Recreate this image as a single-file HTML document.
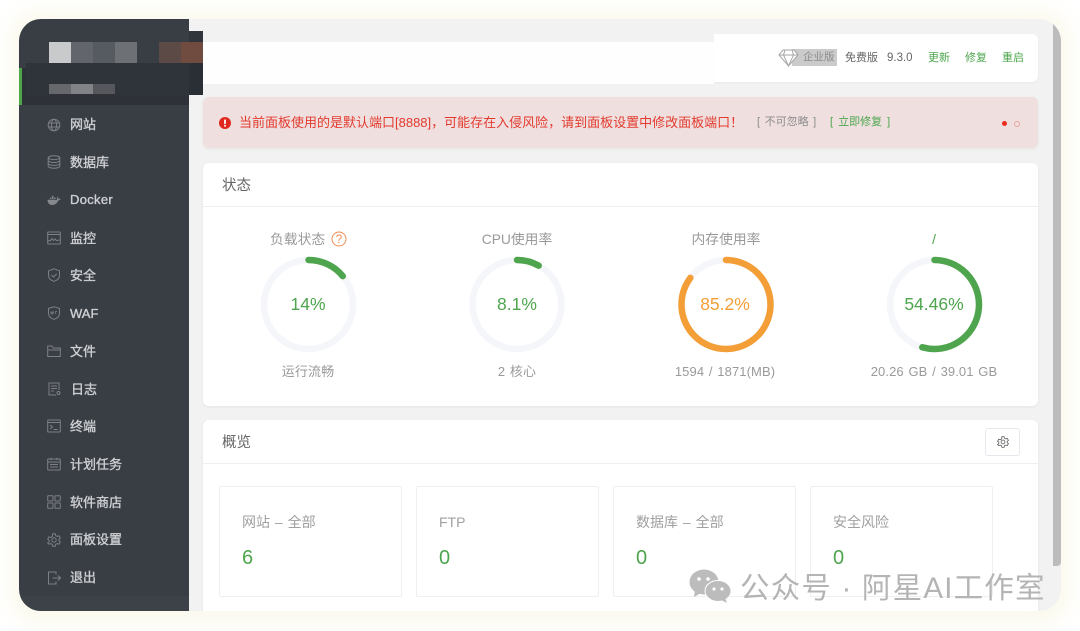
<!DOCTYPE html>
<html><head><meta charset="utf-8">
<style>
*{box-sizing:border-box;margin:0;padding:0}
html,body{width:1080px;height:631px;overflow:hidden;background:#fff}
body{font-family:"Liberation Sans","Noto Sans CJK SC",sans-serif;position:relative}
.a{position:absolute}
.t{position:absolute;white-space:nowrap;line-height:18px}
#glow{left:8px;top:8px;width:1064px;height:618px;border-radius:32px;background:#fbf9ec;filter:blur(9px);opacity:.85}
#win{left:19px;top:19px;width:1042px;height:592px;border-radius:22px;overflow:hidden;background:#f2f2f2}
#side{left:0;top:0;width:170px;height:592px;background:#393e45}
.menu{position:absolute;left:70px;color:#cfd0d3;font-size:13px;font-weight:normal;-webkit-text-stroke:.35px #cfd0d3;line-height:18px;white-space:nowrap}
.ic{position:absolute;left:47px;width:14px;height:14px;fill:none;stroke:#7d8085;stroke-width:1}
.card{position:absolute;background:#fff;border-radius:6px;box-shadow:0 1px 3px rgba(0,0,0,.06)}
.lbl{position:absolute;text-align:center;width:180px;font-size:13.8px;color:#9a9a9a;line-height:18px;white-space:nowrap}
.pct{position:absolute;text-align:center;width:180px;font-size:17.5px;line-height:22px;white-space:nowrap}
.sub{position:absolute;text-align:center;width:200px;font-size:13px;color:#9a9a9a;line-height:18px;white-space:nowrap;letter-spacing:.1px;word-spacing:1px}
.box{position:absolute;top:486px;width:183px;height:111px;border:1px solid #efefef;border-radius:2px;background:#fff}
.box .h{position:absolute;left:22px;top:26px;font-size:14px;color:#a0a0a0;line-height:18px;white-space:nowrap;word-spacing:1px}
.box .n{position:absolute;left:22px;top:60px;font-size:20px;color:#4da64d;line-height:22px}
.px{position:absolute}
</style></head><body>
<div class="a" id="glow"></div>
<div class="a" id="win">
  <div class="a" id="side"></div>
  <div class="a" style="left:3px;top:49px;width:167px;height:37px;background:#2e3238"></div>
  <div class="a" style="left:0;top:49px;width:3px;height:37px;background:#4ea64a"></div>
  <div class="a" style="left:0;top:577px;width:170px;height:15px;background:#3d4148"></div>

  <!-- topbar -->
  <div class="card" style="left:184px;top:15px;width:835px;height:48px;background:#fff;box-shadow:0 1px 2px rgba(0,0,0,.04)"></div>
  <div class="px" style="left:184px;top:12px;width:511px;height:11px;background:#f2f2f2"></div>
  <div class="px" style="left:184px;top:23px;width:511px;height:42px;background:#fefefe"></div>
  <div class="px" style="left:695px;top:15px;width:3px;height:48px;background:#fff"></div>

  <!-- mosaic -->
  <div class="px" style="left:7px;top:44px;width:177px;height:32px;background:#2f343b"></div>
  <div class="px" style="left:170px;top:12px;width:14px;height:11px;background:#30353c"></div>
  <div class="px" style="left:170px;top:44px;width:14px;height:32px;background:#2a2f36"></div>
  <div class="px" style="left:30px;top:23px;width:22px;height:21px;background:#c9cacb"></div>
  <div class="px" style="left:52px;top:23px;width:22px;height:21px;background:#62666c"></div>
  <div class="px" style="left:74px;top:23px;width:22px;height:21px;background:#565a61"></div>
  <div class="px" style="left:96px;top:23px;width:22px;height:21px;background:#6d7176"></div>
  <div class="px" style="left:140px;top:23px;width:22px;height:21px;background:#5b4a46"></div>
  <div class="px" style="left:162px;top:23px;width:22px;height:21px;background:#704c40"></div>
  <div class="px" style="left:30px;top:65px;width:22px;height:10px;background:#66686c"></div>
  <div class="px" style="left:52px;top:65px;width:22px;height:10px;background:#818386"></div>
  <div class="px" style="left:74px;top:65px;width:22px;height:10px;background:#55575c"></div>

  <!-- alert -->
  <div class="card" style="left:184px;top:78px;width:835px;height:51px;background:#efdfdf"></div>
  <!-- status card -->
  <div class="card" style="left:184px;top:144px;width:835px;height:243px"></div>
  <div class="a" style="left:184px;top:187px;width:835px;height:1px;background:#efefef"></div>
  <!-- overview card -->
  <div class="card" style="left:184px;top:401px;width:835px;height:200px;border-radius:6px 6px 0 0"></div>
  <div class="a" style="left:184px;top:444px;width:835px;height:1px;background:#efefef"></div>
  <!-- scrollbar -->
  <div class="a" style="left:1034px;top:0;width:8px;height:547px;background:#bcbcbc;border-radius:0 0 4px 0"></div>
</div>

<!-- sidebar items -->
<svg class="ic" style="top:117.500px" viewBox="0 0 14 14"><circle cx="7" cy="7" r="5.800"/><ellipse cx="7" cy="7" rx="2.600" ry="5.800"/><path d="M1.200 5h11.600M1.200 9h11.600"/></svg>
<div class="menu" style="top:116px">网站</div>
<svg class="ic" style="top:155px" viewBox="0 0 14 14"><ellipse cx="7" cy="2.700" rx="5.800" ry="1.900"/><path d="M1.200 2.700v8.600c0 1 2.600 1.900 5.800 1.900s5.800-.9 5.800-1.900V2.700M1.200 5.600c0 1 2.600 1.900 5.800 1.900s5.800-.9 5.800-1.900M1.200 8.500c0 1 2.600 1.900 5.800 1.900s5.800-.9 5.800-1.900"/></svg>
<div class="menu" style="top:154px">数据库</div>
<svg class="ic" style="top:193px;stroke:none;fill:#85888d" viewBox="0 0 14 14"><path d="M.5 6.800h9.600c.3-.9.200-1.800-.2-2.600l.6-.4c.6.600.9 1.300.9 2 .8-.3 1.600-.2 2.200.2-.4.900-1.200 1.400-2.200 1.400C9.900 10.500 7.800 12 5 12 2.200 12 .6 10 .5 6.800z"/><path d="M3 4.500h1.500V6H3zM5 4.500h1.500V6H5zM7 4.500h1.500V6H7zM5 2.800h1.500v1.400H5z"/></svg>
<div class="menu" style="top:191px;letter-spacing:.3px">Docker</div>
<svg class="ic" style="top:231px" viewBox="0 0 14 14"><rect x=".7" y="1" width="12.600" height="12" rx=".5"/><path d="M.7 3.500h12.600M1 10l2.500-.5 1.500-2 1.500 2 1.500-1.500 1.500 1.500 3-.5"/></svg>
<div class="menu" style="top:229.500px">监控</div>
<svg class="ic" style="top:268px" viewBox="0 0 14 14"><path d="M7 .8l5.500 2v4.700c0 2.800-2.500 4.900-5.500 5.900-3-1-5.500-3.100-5.500-5.900V2.800z"/><path d="M4.500 7l2 2 3.200-3.200"/></svg>
<div class="menu" style="top:267px">安全</div>
<svg class="ic" style="top:306px" viewBox="0 0 14 14"><path d="M7 .8l5.500 1.600v5.100c0 2.800-2.500 4.900-5.500 5.900-3-1-5.500-3.100-5.500-5.900V2.400z"/><path d="M3.500 5.500l.8 2.500.8-2.200.8 2.200.8-2.500M8.500 8V5.500h1.500" stroke-width=".7"/></svg>
<div class="menu" style="top:304.500px">WAF</div>
<svg class="ic" style="top:344px" viewBox="0 0 14 14"><path d="M.7 12.500V2h4.300l1.300 2h7v8.500z"/><path d="M.7 6h12.600"/></svg>
<div class="menu" style="top:342.500px">文件</div>
<svg class="ic" style="top:382px" viewBox="0 0 14 14"><path d="M12 8V1H2v12h7"/><path d="M4 4h6M4 6.500h6M4 9h3"/><circle cx="11.500" cy="11" r="1.500"/></svg>
<div class="menu" style="left:71px;top:380.500px">日志</div>
<svg class="ic" style="top:419px" viewBox="0 0 14 14"><rect x=".7" y="1" width="12.600" height="12" rx=".5"/><path d="M.7 3.500h12.600M3 6l2.500 2L3 10M6.500 10.500h4"/></svg>
<div class="menu" style="top:418px">终端</div>
<svg class="ic" style="top:457px" viewBox="0 0 14 14"><rect x=".7" y="2" width="12.600" height="11" rx=".5"/><path d="M.7 5h12.600M4 .8V3M10 .8V3M3 7.500h8M3 10h8"/></svg>
<div class="menu" style="top:456px">计划任务</div>
<svg class="ic" style="top:495px" viewBox="0 0 14 14"><rect x=".7" y=".7" width="5.300" height="5.300" rx=".6"/><rect x="8" y=".7" width="5.300" height="5.300" rx=".6"/><rect x=".7" y="8" width="5.300" height="5.300" rx=".6"/><rect x="8" y="8" width="5.300" height="5.300" rx=".6"/></svg>
<div class="menu" style="top:493.500px">软件商店</div>
<svg class="ic" style="top:533px" viewBox="0 0 14 14"><path d="M5.700.8h2.600l.4 1.800 1.500.8 1.800-.6 1.300 2.300-1.400 1.200v1.400l1.400 1.200-1.300 2.300-1.800-.6-1.500.8-.4 1.800H5.700l-.4-1.800-1.500-.8-1.800.6L.7 9.900l1.400-1.200V7.300L.7 6.100 2 3.800l1.800.6 1.500-.8z"/><circle cx="7" cy="7" r="2.200"/></svg>
<div class="menu" style="top:531px">面板设置</div>
<svg class="ic" style="top:571px" viewBox="0 0 14 14"><path d="M9 3.500V1H1.500v12H9v-2.500"/><path d="M5.500 7h8M11 4.500L13.500 7 11 9.500"/></svg>
<div class="menu" style="top:569px">退出</div>

<!-- topbar content -->
<div class="a" style="left:792px;top:49px;width:45px;height:17px;background:#cbcbcb"></div>
<svg class="a" style="left:778px;top:49px;width:21px;height:18px" viewBox="0 0 21 18" fill="#fff" stroke="#a6a6a6" stroke-width="1"><path d="M5 1h11l4 5-9.500 11L1 6z"/><path d="M1 6h19M7 1L5.500 6l5 11 5-11L14 1" fill="none"/></svg>
<div class="t" style="left:803px;top:49px;font-size:10.500px;color:#8c8c8c;line-height:17px">企业版</div>
<div class="t" style="left:845px;top:49px;font-size:11px;color:#666">免费版</div>
<div class="t" style="left:887px;top:49px;font-size:11.500px;color:#666">9.3.0</div>
<div class="t" style="left:928px;top:49px;font-size:11px;color:#4da64d">更新</div>
<div class="t" style="left:965px;top:49px;font-size:11px;color:#4da64d">修复</div>
<div class="t" style="left:1002px;top:49px;font-size:11px;color:#4da64d">重启</div>

<!-- alert content -->
<svg class="a" style="left:219px;top:117px;width:12px;height:12px" viewBox="0 0 12 12"><circle cx="6" cy="6" r="6" fill="#e0281e"/><rect x="5.100" y="2.500" width="1.800" height="4.500" rx=".6" fill="#fff"/><circle cx="6" cy="8.800" r="1" fill="#fff"/></svg>
<div class="t" style="left:239px;top:114px;font-size:13px;color:#e33a2e">当前面板使用的是默认端口[8888]，可能存在入侵风险，请到面板设置中修改面板端口！</div>
<div class="t" style="left:757px;top:113px;font-size:11px;color:#8c8c8c;word-spacing:1.500px">[ 不可忽略 ]</div>
<div class="t" style="left:830px;top:113px;font-size:11px;color:#4da64d;word-spacing:2px">[ 立即修复 ]</div>
<div class="a" style="left:1002px;top:121px;width:5px;height:5px;border-radius:50%;background:#ee2c20"></div>
<div class="a" style="left:1014px;top:120.500px;width:6px;height:6px;border-radius:50%;border:1px solid #eaa5a0"></div>

<!-- status -->
<div class="t" style="left:222px;top:176.500px;font-size:14.500px;color:#666">状态</div>
<div class="lbl" style="left:207px;top:231px;text-align:left;padding-left:63px">负载状态</div>
<svg class="a" style="left:331px;top:231px;width:16px;height:16px" viewBox="0 0 16 16" fill="none"><circle cx="8" cy="8" r="7" stroke="#ef8c55" stroke-width="1"/><text x="8" y="12" text-anchor="middle" font-size="11.500" fill="#ef8c55" font-family="Liberation Sans">?</text></svg>
<div class="lbl" style="left:427px;top:231px">CPU使用率</div>
<div class="lbl" style="left:636px;top:231px">内存使用率</div>
<div class="lbl" style="left:844px;top:231px;color:#4da64d">/</div>

<svg class="a" style="left:0;top:0;width:1080px;height:631px" fill="none" stroke-width="6.500">
  <g stroke="#f4f6fa">
    <circle cx="308.500" cy="304.500" r="44.500"/><circle cx="517" cy="304.500" r="44.500"/><circle cx="726" cy="304.500" r="44.500"/><circle cx="934.500" cy="304.500" r="44.500"/>
  </g>
  <g stroke-linecap="round">
    <circle cx="308.500" cy="304.500" r="44.500" stroke="#4fa54d" pathLength="100" stroke-dasharray="14 100" transform="rotate(-90 308.500 304.500)"/>
    <circle cx="517" cy="304.500" r="44.500" stroke="#4fa54d" pathLength="100" stroke-dasharray="8.100 100" transform="rotate(-90 517 304.500)"/>
    <circle cx="726" cy="304.500" r="44.500" stroke="#f39e36" pathLength="100" stroke-dasharray="85.200 100" transform="rotate(-90 726 304.500)"/>
    <circle cx="934.500" cy="304.500" r="44.500" stroke="#4fa54d" pathLength="100" stroke-dasharray="54.460 100" transform="rotate(-90 934.500 304.500)"/>
  </g>
</svg>
<div class="pct" style="left:218px;top:293px;color:#4fa54d">14%</div>
<div class="pct" style="left:427px;top:293px;color:#4fa54d">8.1%</div>
<div class="pct" style="left:635px;top:293px;color:#f39e36">85.2%</div>
<div class="pct" style="left:844px;top:293px;color:#4fa54d">54.46%</div>
<div class="sub" style="left:208px;top:363px">运行流畅</div>
<div class="sub" style="left:417px;top:363px">2 核心</div>
<div class="sub" style="left:625px;top:363px">1594 / 1871(MB)</div>
<div class="sub" style="left:834px;top:363px">20.26 GB / 39.01 GB</div>

<!-- overview -->
<div class="t" style="left:222px;top:433.500px;font-size:14.500px;color:#666">概览</div>
<div class="a" style="left:985px;top:428px;width:35px;height:28px;border:1px solid #e6e8ee;border-radius:3px;background:#fff"></div>
<svg class="a" style="left:997px;top:436px;width:12px;height:12px" viewBox="0 0 14 14" fill="none" stroke="#666" stroke-width="1"><path d="M5.700.8h2.600l.4 1.800 1.500.8 1.800-.6 1.300 2.300-1.400 1.200v1.400l1.400 1.200-1.300 2.300-1.800-.6-1.500.8-.4 1.800H5.700l-.4-1.800-1.500-.8-1.800.6L.7 9.900l1.400-1.200V7.300L.7 6.100 2 3.800l1.800.6 1.500-.8z"/><circle cx="7" cy="7" r="2.200"/></svg>
<div class="box" style="left:219px"><div class="h">网站 – 全部</div><div class="n">6</div></div>
<div class="box" style="left:416px"><div class="h">FTP</div><div class="n">0</div></div>
<div class="box" style="left:613px"><div class="h">数据库 – 全部</div><div class="n">0</div></div>
<div class="box" style="left:810px"><div class="h">安全风险</div><div class="n">0</div></div>

<!-- watermark -->
<svg class="a" style="left:689px;top:568px;width:43px;height:36px" viewBox="0 0 43 36"><ellipse cx="15" cy="14" rx="14.500" ry="12.500" fill="#bcbcbc"/><path d="M6 22l-1 7 7-4z" fill="#bcbcbc"/><ellipse cx="29" cy="23" rx="13" ry="10.500" fill="#bcbcbc" stroke="#fff" stroke-width="1"/><path d="M36 30l2 5-6-3z" fill="#bcbcbc"/><circle cx="10" cy="11" r="1.800" fill="#fff"/><circle cx="19" cy="11" r="1.800" fill="#fff"/><circle cx="25" cy="21" r="1.600" fill="#fff"/><circle cx="33" cy="21" r="1.600" fill="#fff"/></svg>
<div class="t" style="left:740px;top:573px;font-size:29.500px;line-height:31px;color:#b4b4b4;letter-spacing:1.200px">公众号 · 阿星AI工作室</div>
</body></html>
